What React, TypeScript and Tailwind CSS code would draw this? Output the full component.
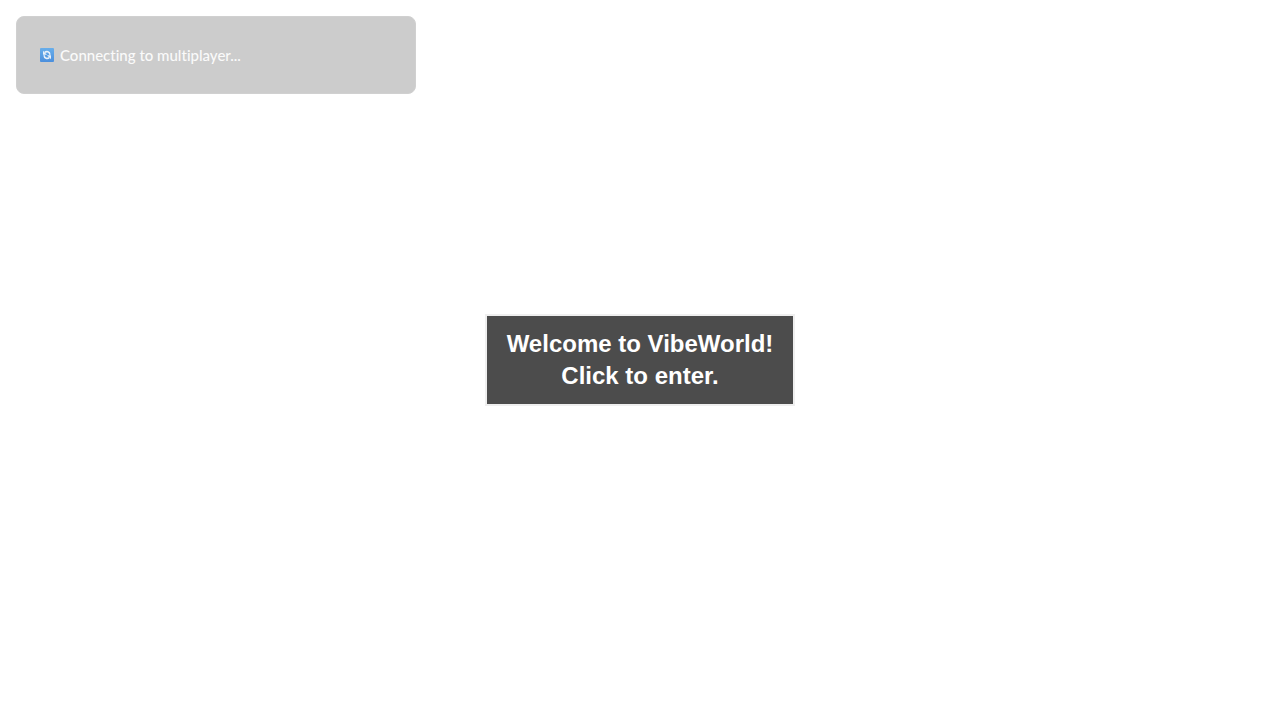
function SyncIcon() {
  return (
    <svg className="size-[14px] shrink-0" viewBox="0 0 14 14" aria-hidden="true">
      <defs>
        <linearGradient id="sync-tile" x1="0" y1="0" x2="0" y2="1">
          <stop offset="0" stopColor="#68aeea" />
          <stop offset="1" stopColor="#4b8fdd" />
        </linearGradient>
      </defs>
      <rect width="14" height="14" rx="1" fill="url(#sync-tile)" />
      <g fill="none" stroke="#e8f1fa" strokeWidth="1.6">
        <path d="M4.8 4.4c1.6-1.4 5-.9 5.1 2.4" />
        <path d="M9.2 9.6c-1.6 1.4-5 .9-5.1-2.4" />
      </g>
      <path d="M3 2.8v4h4zM11 11.2v-4H7z" fill="#e8f1fa" />
    </svg>
  );
}

function ConnectionStatus() {
  return (
    <div
      role="status"
      className="m-4 flex w-full max-w-[400px] items-center gap-1.5 rounded-lg border border-[#d0d0d0] bg-[#cccccc] px-[23px] py-7 font-['Lato',sans-serif] text-[15px] leading-5 font-medium text-[#fafafa] [font-variant-ligatures:none]"
    >
      <SyncIcon />
      <span>Connecting to multiplayer...</span>
    </div>
  );
}

function EnterButton() {
  return (
    <button
      type="button"
      className="cursor-pointer border-2 border-[#efefef] bg-[#4c4c4c] px-5 py-3 text-center font-['Liberation_Sans',Arial,sans-serif] text-2xl font-bold text-white"
    >
      Welcome to VibeWorld!
      <br />
      Click to enter.
    </button>
  );
}

export default function App() {
  return (
    <main className="grid min-h-screen grid-rows-[1fr_auto_1fr] bg-white">
      <div className="flex items-start">
        <ConnectionStatus />
      </div>
      <div className="flex justify-center">
        <EnterButton />
      </div>
    </main>
  );
}
